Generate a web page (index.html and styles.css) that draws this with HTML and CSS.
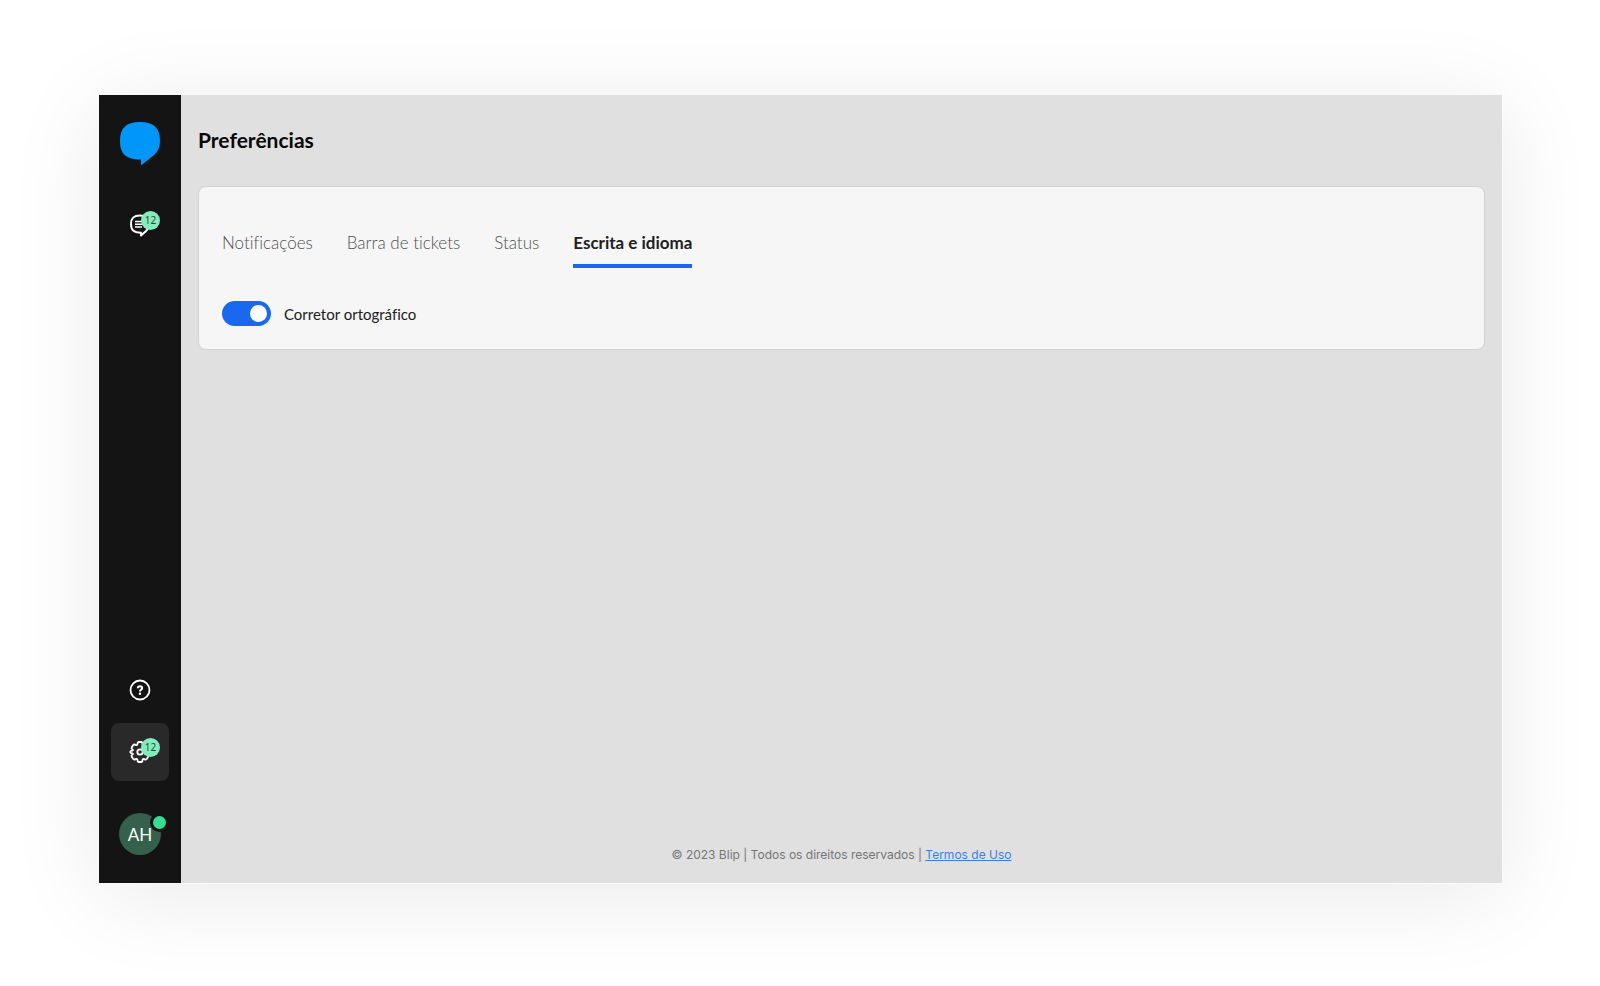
FILE: index.html
```html
<!DOCTYPE html>
<html lang="pt-BR">
<head>
    <meta charset="UTF-8">
    <meta name="viewport" content="width=device-width, initial-scale=1.0">
    <title>Preferências</title>
    <link rel="stylesheet" href="styles.css">
</head>
<body>
    <div class="app">
        <nav class="sidebar">
            <a class="logo" href="#" aria-label="Blip">
                <svg width="40" height="44" viewBox="0 0 40 44">
                    <path fill="#0096fa" d="M20 0C34 0 40 6 40 19C40 25 38 29.500 34 33L21 43.500V37.500C6 37.500 0 32 0 19C0 6 6 0 20 0Z"/>
                </svg>
            </a>

            <a class="nav-item" href="#" aria-label="Tickets">
                <svg width="24" height="24" viewBox="0 0 24 24" fill="none" stroke="#fff" stroke-width="2" stroke-linejoin="round">
                    <path d="M12 2.500C18.500 2.500 21 5 21 11C21 14.500 20 16.500 17.500 18.500L13 22.500V19.800C5.500 19.500 3 17 3 11C3 5 5.500 2.500 12 2.500Z"/>
                    <path stroke-width="1.500" d="M7 8.500h10M7 11.200h10M7 13.900h7"/>
                </svg>
                <span class="badge">12</span>
            </a>

            <div class="nav-bottom">
                <a class="nav-item" href="#" aria-label="Ajuda">
                    <svg width="24" height="24" viewBox="0 0 24 24" fill="none" stroke="#fff">
                        <circle cx="12" cy="12" r="9.500" stroke-width="1.800"/>
                        <path stroke-width="2" d="M9.800 10.200C9.800 7.500 14.200 7.500 14.200 10.100C14.200 11.700 12 11.500 12 13.500"/>
                        <circle cx="12" cy="15.700" r="1.200" fill="#fff" stroke="none"/>
                    </svg>
                </a>
                <a class="nav-item active" href="#" aria-label="Preferências">
                    <svg width="24" height="24" viewBox="0 0 24 24" fill="none" stroke="#fff" stroke-width="1.800" stroke-linejoin="round">
                        <path d="M9.500 4Q9.500 2 11 2H13Q14.500 2 14.500 4Q14.700 5.600 16.300 4.900Q18 4 18.900 5.200L20.200 7.200Q21 8.500 19.600 9.400Q18.300 10.400 19.800 10.700Q21.800 11 21.800 12Q21.800 13 19.800 13.300Q18.300 13.600 19.600 14.600Q21 15.500 20.200 16.800L18.900 18.800Q18 20 16.300 19.100Q14.700 18.400 14.500 20Q14.500 22 13 22H11Q9.500 22 9.500 20Q9.300 18.400 7.700 19.100Q6 20 5.100 18.800L3.800 16.800Q3 15.500 4.400 14.600Q5.700 13.600 4.200 13.300Q2.200 13 2.200 12Q2.200 11 4.200 10.700Q5.700 10.400 4.400 9.400Q3 8.500 3.800 7.200L5.100 5.200Q6 4 7.700 4.900Q9.300 5.600 9.500 4Z"/>
                        <circle cx="12" cy="12" r="2.700"/>
                    </svg>
                    <span class="badge">12</span>
                </a>
            </div>

            <button class="avatar" type="button">AH<span class="status-dot"></span></button>
        </nav>

        <main class="content">
            <h1>Preferências</h1>

            <section class="card">
                <div class="tabs" role="tablist">
                    <button class="tab" type="button" role="tab">Notificações</button>
                    <button class="tab" type="button" role="tab">Barra de tickets</button>
                    <button class="tab" type="button" role="tab">Status</button>
                    <button class="tab selected" type="button" role="tab" aria-selected="true">Escrita e idioma</button>
                </div>
                <div class="setting">
                    <input class="switch" type="checkbox" role="switch" id="spellcheck" checked>
                    <label for="spellcheck">Corretor ortográfico</label>
                </div>
            </section>

            <footer class="footer">© 2023 Blip | Todos os direitos reservados | <a href="#">Termos de Uso</a></footer>
        </main>
    </div>
</body>
</html>
```
FILE: styles.css
```css
* {
    box-sizing: border-box;
}

body {
    margin: 0;
    padding: 95px 98px 103px 99px;
    min-height: 100vh;
    display: flex;
    background: #fff;
    font-family: Lato, "Open Sans", sans-serif;
    font-variant-ligatures: none;
    color: #202020;
}

.app {
    flex: 1;
    display: flex;
    background: #e0e0e0;
    box-shadow: 0 0 0 1px #fafafa, 0 12px 88px rgba(0, 0, 0, 0.09);
}

button {
    font-family: inherit;
    font-variant-ligatures: inherit;
    border: none;
    padding: 0;
    cursor: pointer;
}

/* Sidebar */
.sidebar {
    width: 82px;
    padding: 27px 0 28px;
    display: flex;
    flex-direction: column;
    align-items: center;
    background: #141414;
}

.logo {
    height: 44px;
    margin-bottom: 30px;
}

.logo svg {
    display: block;
}

.nav-item {
    position: relative;
    width: 58px;
    height: 58px;
    display: flex;
    align-items: center;
    justify-content: center;
    border-radius: 8px;
}

.nav-item.active {
    background: #292929;
}

.badge {
    position: absolute;
    top: 15px;
    right: 9px;
    width: 19px;
    height: 19px;
    border-radius: 50%;
    background: #84ebbc;
    color: #2c4a3c;
    font-family: "Noto Sans", sans-serif;
    font-size: 10px;
    line-height: 19px;
    text-align: center;
}

.nav-bottom {
    margin-top: auto;
    display: grid;
    gap: 4px;
}

.avatar {
    position: relative;
    width: 42px;
    height: 42px;
    margin-top: 32px;
    border-radius: 50%;
    background: #35604b;
    color: #fff;
    font-size: 17px;
}

.status-dot {
    position: absolute;
    top: 0;
    right: -8px;
    width: 19px;
    height: 19px;
    border: 3px solid #141414;
    border-radius: 50%;
    background: #35de90;
}

/* Content */
.content {
    flex: 1;
    padding: 31px 17px 20px;
    display: flex;
    flex-direction: column;
}

h1 {
    margin: 0 0 32px;
    font-size: 21px;
    line-height: 28px;
    font-weight: 700;
    color: #080808;
}

.card {
    padding: 45px 23px 23px;
    background: #f6f6f6;
    border: 1px solid #d2d2d2;
    border-radius: 8px;
}

.tabs {
    display: flex;
    gap: 34px;
    margin-bottom: 33px;
}

.tab {
    padding-bottom: 10px;
    background: none;
    border-bottom: 4px solid transparent;
    color: #505050;
    font-size: 17px;
    font-weight: 300;
    line-height: 22px;
}

.tab.selected {
    border-color: #1968f0;
    color: #202020;
    font-weight: 700;
}

.setting {
    display: flex;
    align-items: center;
    gap: 13px;
    font-size: 15px;
    line-height: 24px;
}

.switch {
    appearance: none;
    width: 49px;
    height: 25px;
    margin: 0;
    padding: 4px;
    display: flex;
    justify-content: flex-start;
    border-radius: 13px;
    background: #8c8c8c;
    cursor: pointer;
}

.switch::before {
    content: "";
    width: 17px;
    height: 17px;
    border-radius: 50%;
    background: #fff;
}

.switch:checked {
    justify-content: flex-end;
    background: #1968f0;
}

.footer {
    margin-top: auto;
    font-family: Inter, sans-serif;
    font-size: 12px;
    line-height: 16px;
    text-align: center;
    color: #757575;
}

.footer a {
    color: #3f7de8;
}
```
